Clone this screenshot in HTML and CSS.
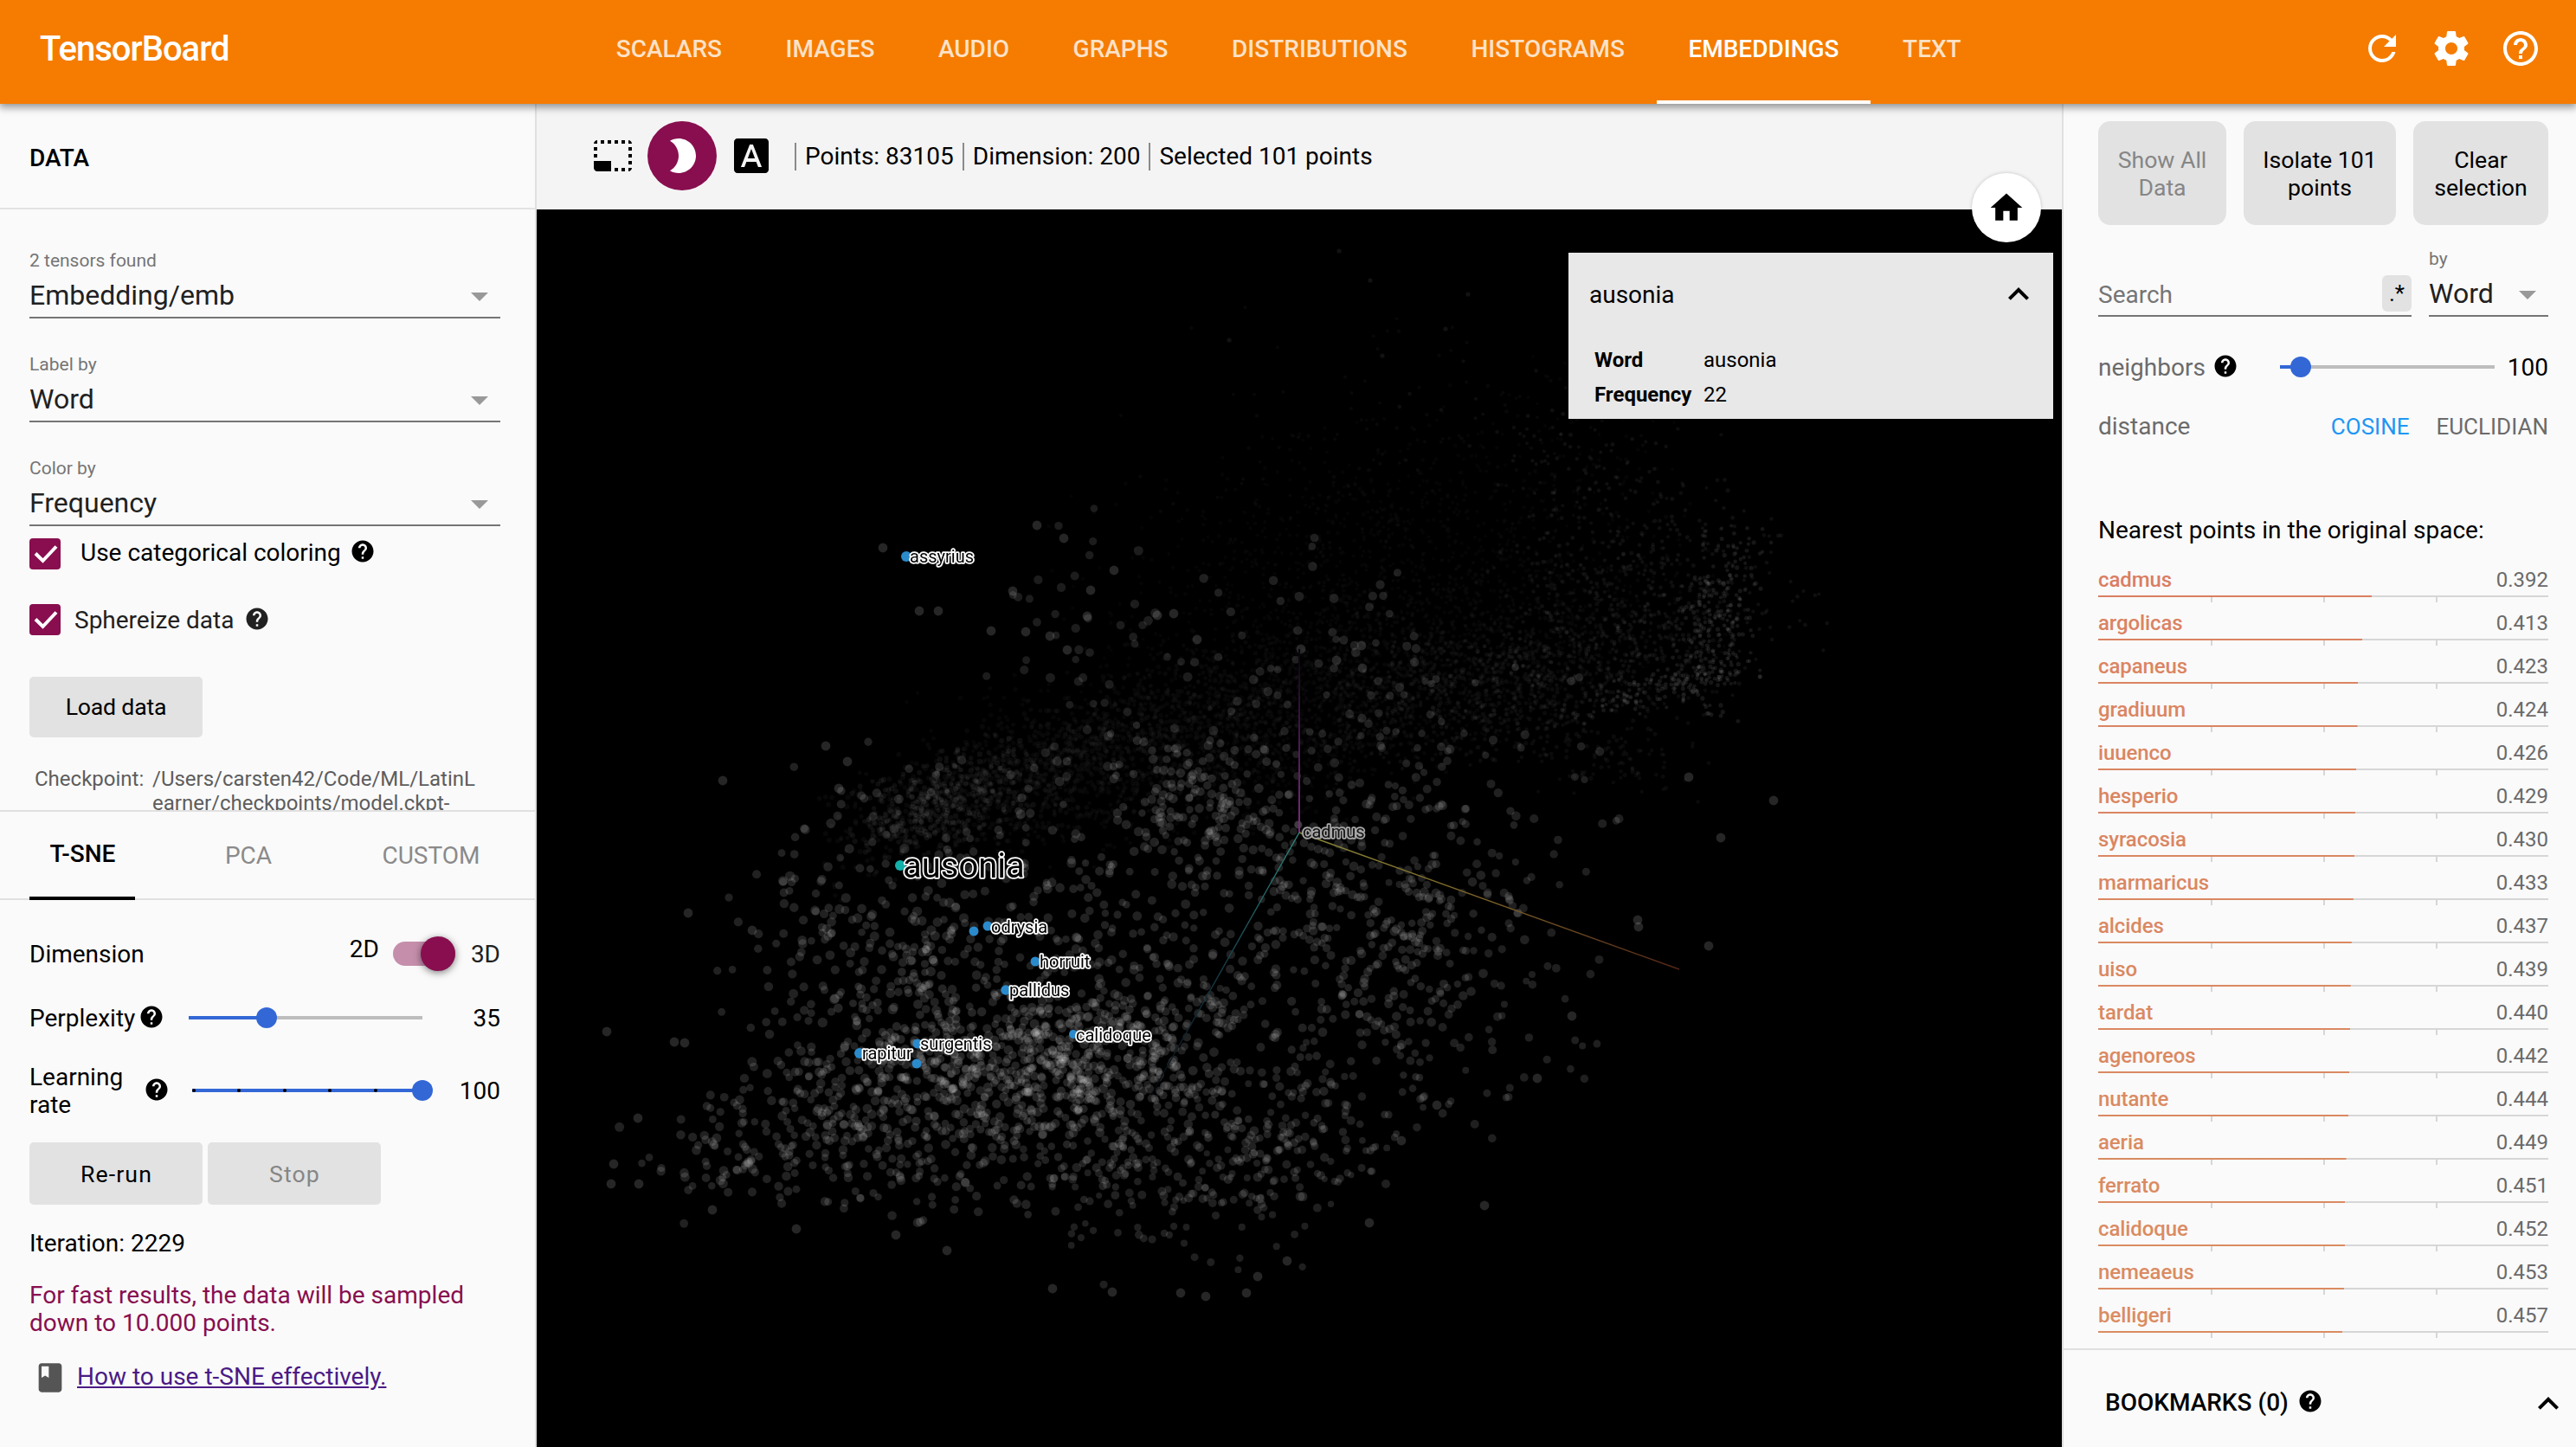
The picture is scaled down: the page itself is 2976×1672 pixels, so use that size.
FILE: index.html
```html
<!DOCTYPE html>
<html lang="en">
<head>
<meta charset="utf-8">
<title>TensorBoard</title>
<link rel="stylesheet" href="styles.css">
</head>
<body>
<svg class="defs" width="0" height="0">
  <symbol id="i-help" viewBox="0 0 24 24"><path d="M12 2C6.48 2 2 6.48 2 12s4.480 10 10 10 10-4.480 10-10S17.520 2 12 2zm1 17h-2v-2h2v2zm2.070-7.750l-.9.920C13.450 12.900 13 13.500 13 15h-2v-.5c0-1.100.450-2.100 1.170-2.830l1.240-1.260c.370-.360.590-.860.590-1.410 0-1.100-.9-2-2-2s-2 .9-2 2H8c0-2.210 1.790-4 4-4s4 1.790 4 4c0 .880-.360 1.680-.930 2.250z"/></symbol>
  <symbol id="i-drop" viewBox="0 0 24 24"><path d="M7 10l5 5 5-5z"/></symbol>
  <symbol id="i-check" viewBox="0 0 36 36"><path d="M7 17.500l8.500 8.500L31 9.500" fill="none" stroke="#fff" stroke-width="4"/></symbol>
  <symbol id="i-less" viewBox="0 0 24 24"><path d="M12 8l-6 6 1.410 1.410L12 10.830l4.590 4.580L18 14z"/></symbol>
</svg>

<header class="topbar">
  <div class="brand">TensorBoard</div>
  <nav class="tabs">
    <a class="tab">SCALARS</a>
    <a class="tab">IMAGES</a>
    <a class="tab">AUDIO</a>
    <a class="tab">GRAPHS</a>
    <a class="tab">DISTRIBUTIONS</a>
    <a class="tab">HISTOGRAMS</a>
    <a class="tab active">EMBEDDINGS</a>
    <a class="tab">TEXT</a>
  </nav>
  <div class="actions">
    <svg class="icon" viewBox="0 0 24 24"><path d="M17.650 6.350C16.200 4.900 14.210 4 12 4c-4.420 0-7.990 3.580-7.990 8s3.570 8 7.990 8c3.730 0 6.840-2.550 7.730-6h-2.080c-.820 2.330-3.040 4-5.650 4-3.310 0-6-2.690-6-6s2.690-6 6-6c1.660 0 3.140.690 4.220 1.780L13 11h7V4l-2.350 2.350z"/></svg>
    <svg class="icon" viewBox="0 0 24 24"><path d="M19.430 12.980c.040-.320.070-.640.070-.980s-.030-.660-.070-.980l2.110-1.650c.190-.150.240-.420.120-.640l-2-3.460c-.120-.220-.390-.300-.610-.220l-2.490 1c-.520-.400-1.080-.730-1.690-.980l-.380-2.650C14.460 2.180 14.250 2 14 2h-4c-.250 0-.460.180-.490.420l-.380 2.650c-.610.250-1.170.590-1.690.980l-2.490-1c-.230-.090-.490 0-.610.220l-2 3.460c-.130.220-.070.490.120.640l2.110 1.650c-.040.320-.070.650-.070.980s.030.660.070.980l-2.110 1.650c-.190.150-.240.420-.120.640l2 3.460c.120.220.390.300.610.220l2.490-1c.520.400 1.080.730 1.690.980l.380 2.650c.030.240.240.420.490.420h4c.250 0 .460-.180.490-.420l.380-2.650c.610-.250 1.170-.590 1.690-.980l2.490 1c.230.090.490 0 .610-.220l2-3.460c.120-.220.070-.490-.120-.640l-2.110-1.650zM12 15.500c-1.930 0-3.500-1.570-3.500-3.500s1.570-3.500 3.500-3.500 3.500 1.570 3.500 3.500-1.570 3.500-3.500 3.500z"/></svg>
    <svg class="icon" viewBox="0 0 24 24"><path d="M11 18h2v-2h-2v2zm1-16C6.480 2 2 6.480 2 12s4.480 10 10 10 10-4.480 10-10S17.520 2 12 2zm0 18c-4.410 0-8-3.590-8-8s3.590-8 8-8 8 3.590 8 8-3.590 8-8 8zm0-14c-2.210 0-4 1.790-4 4h2c0-1.100.9-2 2-2s2 .9 2 2c0 2-3 1.750-3 5h2c0-2.250 3-2.500 3-5 0-2.210-1.790-4-4-4z"/></svg>
  </div>
</header>

<main class="body">
  <aside class="left">
    <h2 class="panel-title">DATA</h2>
    <section class="data">
      <div class="field"><span class="field-label">2 tensors found</span><div class="field-value">Embedding/emb<svg class="drop"><use href="#i-drop"/></svg></div></div>
      <div class="field"><span class="field-label">Label by</span><div class="field-value">Word<svg class="drop"><use href="#i-drop"/></svg></div></div>
      <div class="field"><span class="field-label">Color by</span><div class="field-value">Frequency<svg class="drop"><use href="#i-drop"/></svg></div></div>
      <div class="check first"><svg class="box"><use href="#i-check"/></svg><span>Use categorical coloring</span><svg class="help"><use href="#i-help"/></svg></div>
      <div class="check second"><svg class="box"><use href="#i-check"/></svg><span>Sphereize data</span><svg class="help"><use href="#i-help"/></svg></div>
      <button class="btn load">Load data</button>
      <div class="checkpoint"><span>Checkpoint:</span><span>/Users/carsten42/Code/ML/LatinL<br>earner/checkpoints/model.ckpt-</span></div>
    </section>
    <nav class="proj-tabs">
      <a class="proj on"><span>T-SNE</span></a>
      <a class="proj pca">PCA</a>
      <a class="proj custom">CUSTOM</a>
    </nav>
    <section class="tsne">
      <div class="row dim"><span class="grow">Dimension</span><span class="two">2D</span><div class="toggle"><i></i></div><span class="three">3D</span></div>
      <div class="row perp">
        <div class="lab"><span>Perplexity</span><svg class="help"><use href="#i-help"/></svg></div>
        <div class="slider"><i class="fill" style="width:33.3%"></i><i class="knob" style="left:33.3%"></i></div>
        <span class="val">35</span>
      </div>
      <div class="row rate">
        <div class="lab"><span>Learning<br>rate</span><svg class="help"><use href="#i-help"/></svg></div>
        <div class="slider"><i class="fill" style="width:100%"></i><div class="dots"><b></b><b></b><b></b><b></b><b></b><b></b></div><i class="knob" style="left:100%"></i></div>
        <span class="val">100</span>
      </div>
      <div class="buttons"><button class="btn run">Re-run</button><button class="btn run off">Stop</button></div>
      <p class="iter">Iteration: 2229</p>
      <p class="note">For fast results, the data will be sampled<br>down to 10.000 points.</p>
      <div class="howto"><svg class="book" viewBox="0 0 24 24"><path d="M18 2H6c-1.100 0-2 .9-2 2v16c0 1.100.9 2 2 2h12c1.100 0 2-.9 2-2V4c0-1.100-.9-2-2-2zM6 4h5v8l-2.500-1.500L6 12V4z"/></svg><a>How to use t-SNE effectively.</a></div>
    </section>
  </aside>

  <section class="center">
    <div class="toolbar">
      <svg class="icon select" viewBox="0 0 24 24"><path d="M23 15h-2v2h2v-2zm0-4h-2v2h2v-2zm0 8h-2v2c1 0 2-1 2-2zM15 3h-2v2h2V3zm8 4h-2v2h2V7zm-2-4v2h2c0-1-1-2-2-2zM3 21h8v-6H1v4c0 1.100.9 2 2 2zM3 7H1v2h2V7zm12 12h-2v2h2v-2zm4-16h-2v2h2V3zm0 16h-2v2h2v-2zM3 3C2 3 1 4 1 5h2V3zm0 8H1v2h2v-2zm8-8H9v2h2V3zM7 3H5v2h2V3z"/></svg>
      <span class="night"><svg class="icon" viewBox="0 0 24 24"><path d="M10 2c-1.820 0-3.530.5-5 1.350C7.990 5.080 10 8.300 10 12s-2.010 6.920-5 8.650C6.470 21.500 8.180 22 10 22c5.520 0 10-4.480 10-10S15.520 2 10 2z"/></svg></span>
      <svg class="icon letters" viewBox="0 0 24 24"><path d="M9.930 13.500h4.140L12 7.980zM20 2H4c-1.100 0-2 .9-2 2v16c0 1.100.9 2 2 2h16c1.100 0 2-.9 2-2V4c0-1.100-.9-2-2-2zm-4.050 16.500l-1.140-3H9.170l-1.120 3H5.960l5.110-13h1.860l5.110 13h-2.090z"/></svg>
      <div class="stats"><span>Points: 83105</span><span>Dimension: 200</span><span>Selected 101 points</span></div>
    </div>
    <div class="scene">
      <canvas id="cloud" width="1762" height="1430"></canvas>
      <svg class="overlay" viewBox="620 242 1762 1430">
        <defs>
          <linearGradient id="ax" gradientUnits="userSpaceOnUse" x1="1501" y1="962" x2="1940" y2="1120"><stop offset="0" stop-color="#8a8b38"/><stop offset=".5" stop-color="#7a6028"/><stop offset="1" stop-color="#542516"/></linearGradient>
          <linearGradient id="ay" gradientUnits="userSpaceOnUse" x1="1501" y1="962" x2="1501" y2="750"><stop offset="0" stop-color="#7d2b80"/><stop offset=".5" stop-color="#47194f"/><stop offset="1" stop-color="#08030c"/></linearGradient>
          <linearGradient id="az" gradientUnits="userSpaceOnUse" x1="1501" y1="962" x2="1330" y2="1265"><stop offset="0" stop-color="#2f8a80"/><stop offset=".5" stop-color="#183f4c"/><stop offset="1" stop-color="#05090f"/></linearGradient>
        </defs>
        <path d="M1501 962L1940 1120" stroke="url(#ax)" stroke-width="1.400"/>
        <path d="M1500 962h2V750h-2z" fill="url(#ay)"/>
        <path d="M1501 962L1330 1265" stroke="url(#az)" stroke-width="1.400"/>
        <g class="hits">
          <circle cx="1047" cy="643" r="6"/><circle cx="1141" cy="1070" r="5.500"/><circle cx="1125" cy="1076" r="5.500"/>
          <circle cx="1196" cy="1111" r="5.500"/><circle cx="1162" cy="1144" r="5.800"/><circle cx="1240" cy="1195" r="5"/>
          <circle cx="1060" cy="1206" r="5.500"/><circle cx="993" cy="1217" r="6"/><circle cx="1059" cy="1229" r="5.500"/>
          <circle class="picked" cx="1040" cy="1000" r="6"/>
        </g>
        <g class="names">
          <text x="1051" y="650">assyrius</text>
          <text x="1145" y="1078">odrysia</text>
          <text x="1201" y="1118">horruit</text>
          <text x="1166" y="1151">pallidus</text>
          <text x="1243" y="1203">calidoque</text>
          <text x="1063" y="1213">surgentis</text>
          <text x="996" y="1224">rapitur</text>
          <text class="dim-name" x="1505" y="968">cadmus</text>
          <text class="main-name" x="1043" y="1014">ausonia</text>
        </g>
      </svg>
      <span class="home"><svg viewBox="0 0 24 24"><path d="M10 20v-6h4v6h5v-8h3L12 3 2 12h3v8z"/></svg></span>
      <div class="card">
        <div class="card-head"><span>ausonia</span><svg class="icon"><use href="#i-less"/></svg></div>
        <dl><dt>Word</dt><dd>ausonia</dd><dt>Frequency</dt><dd>22</dd></dl>
      </div>
    </div>
  </section>

  <aside class="right">
    <section class="inspect">
      <div class="filters"><button class="btn sq w1 off">Show All<br>Data</button><button class="btn sq w2">Isolate 101<br>points</button><button class="btn sq w3">Clear<br>selection</button></div>
      <div class="searchrow">
        <div class="search"><span>Search</span><button class="regex">.*</button></div>
        <div class="field by"><span class="field-label">by</span><div class="field-value">Word<svg class="drop"><use href="#i-drop"/></svg></div></div>
      </div>
      <div class="row nb">
        <div class="lab"><span>neighbors</span><svg class="help"><use href="#i-help"/></svg></div>
        <div class="slider"><i class="fill" style="width:9.700%"></i><i class="knob" style="left:9.700%"></i></div>
        <span class="val">100</span>
      </div>
      <div class="row dist"><span class="grow">distance</span><a class="on">COSINE</a><a>EUCLIDIAN</a></div>
      <p class="near">Nearest points in the original space:</p>
      <div class="list">
        <div class="item" style="--d:.392"><div><span>cadmus</span><em>0.392</em></div><i></i></div>
        <div class="item" style="--d:.413"><div><span>argolicas</span><em>0.413</em></div><i></i></div>
        <div class="item" style="--d:.423"><div><span>capaneus</span><em>0.423</em></div><i></i></div>
        <div class="item" style="--d:.424"><div><span>gradiuum</span><em>0.424</em></div><i></i></div>
        <div class="item" style="--d:.426"><div><span>iuuenco</span><em>0.426</em></div><i></i></div>
        <div class="item" style="--d:.429"><div><span>hesperio</span><em>0.429</em></div><i></i></div>
        <div class="item" style="--d:.430"><div><span>syracosia</span><em>0.430</em></div><i></i></div>
        <div class="item" style="--d:.433"><div><span>marmaricus</span><em>0.433</em></div><i></i></div>
        <div class="item" style="--d:.437"><div><span>alcides</span><em>0.437</em></div><i></i></div>
        <div class="item" style="--d:.439"><div><span>uiso</span><em>0.439</em></div><i></i></div>
        <div class="item" style="--d:.440"><div><span>tardat</span><em>0.440</em></div><i></i></div>
        <div class="item" style="--d:.442"><div><span>agenoreos</span><em>0.442</em></div><i></i></div>
        <div class="item" style="--d:.444"><div><span>nutante</span><em>0.444</em></div><i></i></div>
        <div class="item" style="--d:.449"><div><span>aeria</span><em>0.449</em></div><i></i></div>
        <div class="item" style="--d:.451"><div><span>ferrato</span><em>0.451</em></div><i></i></div>
        <div class="item" style="--d:.452"><div><span>calidoque</span><em>0.452</em></div><i></i></div>
        <div class="item" style="--d:.453"><div><span>nemeaeus</span><em>0.453</em></div><i></i></div>
        <div class="item" style="--d:.457"><div><span>belligeri</span><em>0.457</em></div><i></i></div>
      </div>
    </section>
    <footer class="bookmarks"><span>BOOKMARKS (0)</span><svg class="help"><use href="#i-help"/></svg><svg class="icon"><use href="#i-less"/></svg></footer>
  </aside>
</main>
<script src="cloud.js"></script>
</body>
</html>
```
FILE: styles.css
```css
* { box-sizing: border-box; }

body {
  margin: 0;
  width: 2976px;
  height: 1672px;
  overflow: hidden;
  display: flex;
  flex-direction: column;
  background: #fafafa;
  color: #000;
  font-family: Roboto, "Liberation Sans", sans-serif;
  font-size: 28px;
  line-height: 32px;
}

p, h2, dl, dd { margin: 0; }
svg { display: block; flex: none; }
.defs { position: absolute; }
.icon { width: 48px; height: 48px; fill: currentColor; }
.help { width: 30px; height: 30px; }
.grow { flex: 1; }

/* top bar */
.topbar {
  flex: none;
  height: 120px;
  display: flex;
  background: #f57c00;
  color: #fff;
  position: relative;
  z-index: 5;
  box-shadow: 0 3px 9px 1px rgba(0, 0, 0, .42);
}
.brand {
  flex: 0 0 675px;
  padding: 0 0 7px 46px;
  display: flex;
  align-items: center;
  font-size: 40px;
  font-weight: 500;
  letter-spacing: -1px;
}
.tabs { display: flex; }
.tab {
  display: flex;
  align-items: center;
  padding: 0 36.750px 2px;
  border-bottom: 4px solid transparent;
  color: rgba(255, 255, 255, .78);
  font-weight: 500;
}
.tab.active { color: #fff; border-color: #fff; }
.actions {
  margin-left: auto;
  padding: 0 40px 8px 0;
  display: flex;
  align-items: center;
  gap: 32px;
}

.body {
  flex: 1;
  display: grid;
  grid-template-columns: 620px 1fr 594px;
  min-height: 0;
}

/* left panel */
.left {
  border-right: 2px solid #e0e0e0;
  display: flex;
  flex-direction: column;
  min-height: 0;
}
.panel-title {
  height: 122px;
  padding: 5px 34px 0;
  display: flex;
  align-items: center;
  border-bottom: 2px solid #e3e3e3;
  font-size: 28px;
  font-weight: 500;
}
.data { height: 694px; padding: 6px 40px 0 34px; overflow: hidden; }
.field {
  height: 120px;
  display: flex;
  flex-direction: column;
  justify-content: flex-end;
  padding-bottom: 5px;
  border-bottom: 2px solid #757575;
}
.field-label { font-size: 21px; line-height: 24px; margin-bottom: 8px; color: #757575; }
.field-value {
  height: 40px;
  display: flex;
  align-items: center;
  justify-content: space-between;
  font-size: 32px;
  color: #212121;
}
.drop { width: 48px; height: 48px; margin-top: 2px; fill: #999; }

.check { display: flex; align-items: flex-start; height: 36px; }
.box { width: 36px; height: 36px; background: #880e4f; border-radius: 4px; }
.first { margin-top: 14px; }
.first span { margin: 1px 10px 0 23px; }
.second { margin-top: 40px; color: #212121; fill: #212121; }
.second span { margin: 3px 12px 0 16px; }
.second .help { margin-top: 2px; }

.btn {
  border: 0;
  padding: 0;
  border-radius: 5px;
  background: #e2e2e2;
  color: #000;
  font-family: inherit;
  font-size: 26.670px;
  line-height: 32px;
}
.btn.off { color: #868686; }
.load { display: block; width: 200px; height: 70px; margin-top: 48px; letter-spacing: -.2px; }
.checkpoint {
  margin-top: 34px;
  padding-left: 6px;
  display: grid;
  grid-template-columns: 136px 1fr;
  font-size: 24px;
  line-height: 28px;
  color: #5d5d5d;
}

.proj-tabs {
  flex: none;
  height: 104px;
  padding-left: 34px;
  display: flex;
  border-top: 2px solid #e0e0e0;
  border-bottom: 2px solid #e0e0e0;
}
.proj { display: flex; align-items: center; justify-content: center; color: #8a8a8a; padding-top: 2px; }
.on.proj {
  width: 122px;
  margin-bottom: -2px;
  padding: 0 0 1px 1px;
  border-bottom: 4px solid #000;
  color: #000;
  font-weight: 500;
}
.pca { width: 262px; }
.custom { width: 160px; }

.tsne { padding: 42px 40px 0 34px; }
.row { display: flex; align-items: center; }
.row > span, .row > a, .lab > span { padding-top: 2px; }
.dim { height: 40px; }
.two { margin: -12px 16px 0 0; }
.toggle {
  width: 72px;
  height: 28px;
  margin-right: 18px;
  border-radius: 14px;
  background: #c58fac;
  display: flex;
  align-items: center;
  justify-content: flex-end;
}
.toggle i {
  width: 40px;
  height: 40px;
  border-radius: 50%;
  background: #880e4f;
  box-shadow: 0 2px 8px rgba(0, 0, 0, .5);
  flex: none;
}
.three { color: #212121; }
.perp { height: 32px; margin-top: 38px; }
.lab { display: flex; align-items: center; }
.lab .help { margin-top: -2px; }
.perp .lab { width: 184px; gap: 4px; }
.perp .slider { width: 270px; }
.rate { height: 64px; margin-top: 36px; }
.rate .lab { width: 188px; }
.rate .lab span { width: 132px; }
.rate .slider { width: 266px; }
.val { flex: 1; text-align: right; }

.slider { position: relative; height: 4px; background: #bdbdbd; }
.fill { display: block; height: 4px; background: #3367d6; }
.knob {
  position: absolute;
  top: -10px;
  width: 24px;
  height: 24px;
  margin-left: -12px;
  border-radius: 50%;
  background: #3367d6;
}
.dots { display: flex; justify-content: space-between; margin-top: -4px; }
.dots b { width: 4px; height: 4px; border-radius: 50%; background: #000; }

.buttons { display: flex; gap: 6px; margin-top: 28px; }
.run { width: 200px; height: 72px; letter-spacing: 1.100px; padding: 1px 0 0 1px; }
.iter { margin-top: 29px; }
.note { margin-top: 28px; color: #880e4f; }
.howto { margin-top: 27px; height: 40px; display: flex; align-items: center; }
.book { width: 40px; height: 40px; margin: 0 11px 0 4px; fill: #555; }
.howto a { color: #4b1a85; text-decoration: underline; margin-top: -3px; }

/* projector */
.center { display: flex; flex-direction: column; min-width: 0; }
.toolbar {
  height: 122px;
  padding: 0 0 2px 64px;
  display: flex;
  align-items: center;
  background: #f4f4f4;
}
.night {
  width: 80px;
  height: 80px;
  margin: 0 16px;
  border-radius: 50%;
  background: #880e4f;
  color: #fff;
  display: flex;
  align-items: center;
  justify-content: center;
}
.stats { display: flex; margin-left: 26px; padding-top: 1px; }
.stats span { padding: 0 10px; border-left: 2px solid #8a8a8a; }

.scene { flex: 1; position: relative; background: #000; }
#cloud, .overlay { position: absolute; left: 0; top: 0; width: 1762px; height: 1430px; }
.hits { fill: #2b8acb; }
.picked { fill: #14b0aa; }
.names text {
  font-size: 20px;
  fill: #000;
  stroke: #fff;
  stroke-width: 3.500px;
  stroke-linejoin: round;
  paint-order: stroke;
}
.names .main-name { font-size: 40px; }
.names .dim-name { stroke: #a8a8a8; fill: #111; }

.home {
  position: absolute;
  right: 24px;
  top: -42px;
  width: 80px;
  height: 80px;
  border-radius: 50%;
  background: #fff;
  box-shadow: 0 0 4px rgba(0, 0, 0, .2);
  display: flex;
  align-items: center;
  justify-content: center;
}
.home svg { width: 44px; height: 44px; }
.card {
  position: absolute;
  right: 10px;
  top: 50px;
  width: 560px;
  height: 192px;
  padding: 24px 16px 0 24px;
  background: #e8e8e8;
}
.card-head { display: flex; align-items: center; justify-content: space-between; height: 48px; }
.card-head span { padding-top: 2px; }
.card dl {
  margin: 32px 0 0 6px;
  display: grid;
  grid-template-columns: 126px 1fr;
  font-size: 24px;
  line-height: 40px;
}
.card dt { font-weight: 700; }

/* inspector */
.right {
  border-left: 2px solid #e0e0e0;
  display: flex;
  flex-direction: column;
  min-height: 0;
}
.inspect { flex: 1; padding: 20px 32px 0 40px; min-height: 0; }
.filters { display: flex; gap: 20px; }
.sq { height: 120px; border-radius: 14px; padding-top: 1px; }
.w1 { width: 148px; }
.w2 { width: 176px; }
.w3 { width: 156px; }
.searchrow { display: flex; align-items: flex-end; gap: 20px; height: 106px; }
.search {
  width: 362px;
  height: 50px;
  display: flex;
  align-items: center;
  justify-content: space-between;
  border-bottom: 2px solid #757575;
  color: #757575;
}
.search span { padding-top: 2px; }
.regex {
  width: 34px;
  height: 42px;
  margin-bottom: 2px;
  border: 0;
  padding: 0;
  border-radius: 6px;
  background: #e2e2e2;
  font-family: inherit;
  font-size: 26px;
}
.by { width: 138px; height: 106px; }
.nb { height: 32px; margin-top: 42px; }
.nb .lab { width: 210px; gap: 8px; }
.nb .lab span { color: #6b6b6b; }
.nb .slider { width: 248px; }
.dist { height: 32px; margin-top: 36px; color: #6b6b6b; }
.dist a { font-size: 26px; margin-left: 31px; }
.dist .on { color: #2196f3; }
.near { margin-top: 89px; }
.list { margin-top: 11px; }
.item { height: 50px; padding-top: 16px; color: hsl(calc(14 + (var(--d) - .392) * 110), 62%, 62%); }
.item div {
  display: flex;
  justify-content: space-between;
  height: 32px;
  font-size: 24px;
  line-height: 28px;
}
.item span { font-weight: 500; letter-spacing: -.1px; }
.item em { font-style: normal; color: #6a6a6a; }
.item i {
  display: block;
  height: 8px;
  background:
    linear-gradient(currentColor, currentColor) 0 0 / calc((1 - var(--d)) * 520px) 2px no-repeat,
    linear-gradient(#d6d6d6, #d6d6d6) 0 0 / 100% 2px no-repeat,
    linear-gradient(#d6d6d6, #d6d6d6) 130px 0 / 2px 8px no-repeat,
    linear-gradient(#d6d6d6, #d6d6d6) 260px 0 / 2px 8px no-repeat,
    linear-gradient(#d6d6d6, #d6d6d6) 390px 0 / 2px 8px no-repeat;
}
.bookmarks {
  flex: none;
  height: 114px;
  padding: 9px 8px 0 48px;
  display: flex;
  align-items: center;
  border-top: 2px solid #e0e0e0;
  font-weight: 500;
}
.bookmarks .help { margin: -4px auto 0 10px; }
.bookmarks .icon { margin-top: 2px; }
```
FILE: cloud.js
```js
// Seeded point cloud: every cluster is a rotated gaussian in page coordinates.
const ctx = document.getElementById('cloud').getContext('2d');
ctx.translate(-620, -242);
let seed = 20177;
function rnd() {
  seed = (seed + 0x6D2B79F5) | 0;
  let t = Math.imul(seed ^ (seed >>> 15), 1 | seed);
  t = (t + Math.imul(t ^ (t >>> 7), 61 | t)) ^ t;
  return ((t ^ (t >>> 14)) >>> 0) / 4294967296;
}
function gauss() {
  let g;
  do { g = Math.sqrt(-2 * Math.log(1 - rnd())) * Math.cos(6.28318 * rnd()); } while (Math.abs(g) > 2.1);
  return g;
}
function dot(x, y, r, a) {
  ctx.fillStyle = 'rgba(255,255,255,' + a + ')';
  ctx.beginPath();
  ctx.arc(x, y, r, 0, 7);
  ctx.fill();
}
// n, centre x, centre y, spread along, spread across, angle, radius, alpha
const clusters = [
  // far side
  [1500, 1600, 680, 180, 100, -0.3, 2.2, 0.02],
  [1300, 1560, 800, 210, 52, -0.3, 2.4, 0.026],
  [850, 1760, 790, 110, 42, -0.15, 2.4, 0.042],
  [350, 1890, 700, 85, 50, 0, 2.3, 0.055],
  [230, 1985, 715, 24, 55, 0.2, 2.4, 0.085],
  [140, 1920, 795, 55, 12, -0.25, 2.4, 0.085],
  [130, 1880, 590, 85, 45, 0.5, 2.3, 0.06],
  [60, 1840, 520, 110, 40, 0.3, 2.2, 0.05],
  [110, 1600, 520, 150, 80, 0, 2.1, 0.03],
  [80, 1860, 885, 55, 20, 0, 2.4, 0.04],
  [10, 2085, 705, 25, 30, 0, 2.2, 0.06],
  // middle distance
  [900, 1210, 890, 135, 38, -0.35, 2.8, 0.03],
  [400, 1090, 925, 55, 26, -0.4, 3.0, 0.055],
  [900, 1400, 850, 170, 60, -0.2, 2.6, 0.025],
  // near side
  [110, 1410, 935, 80, 48, 0, 4.9, 0.13],
  [45, 1385, 930, 42, 36, 0, 5.0, 0.13],
  [52, 1250, 770, 90, 80, 0.5, 5.0, 0.11],
  [50, 1530, 760, 80, 65, 0.4, 5.0, 0.12],
  [100, 1650, 900, 105, 70, 0, 4.8, 0.12],
  [190, 1560, 1060, 100, 95, 0, 4.9, 0.13],
  [60, 1600, 1100, 50, 65, 0, 4.9, 0.13],
  [130, 1680, 1120, 90, 90, 0, 4.6, 0.12],
  [300, 1240, 1060, 160, 100, 0, 5.0, 0.13],
  [260, 1180, 1160, 170, 75, 0, 5.0, 0.13],
  [120, 1000, 1070, 75, 80, 0, 5.2, 0.13],
  [330, 1180, 1225, 110, 45, 0.1, 5.0, 0.14],
  [80, 1290, 1190, 75, 32, 0, 4.9, 0.13],
  [400, 1210, 1280, 190, 58, 0, 4.9, 0.13],
  [135, 900, 1310, 90, 40, -0.2, 5.0, 0.13],
  [130, 1040, 1320, 110, 45, 0, 4.9, 0.13],
  [180, 1390, 1340, 120, 50, 0, 4.6, 0.12],
  [90, 1510, 1260, 120, 60, 0, 4.5, 0.12],
  [40, 1390, 1390, 100, 45, 0, 4.2, 0.12]
];
for (const [n, cx, cy, sa, sb, ang, r, a] of clusters) {
  for (let i = 0; i < n; i++) {
    const u = gauss() * sa, v = gauss() * sb, k = 0.85 + rnd() * 0.25;
    dot(cx + u * Math.cos(ang) - v * Math.sin(ang), cy + u * Math.sin(ang) + v * Math.cos(ang), r * k, a);
  }
}
const strays = [
  [1020, 633], [1198, 607], [1229, 622], [1287, 659], [1260, 682], [1170, 683], [1062, 706], [1084, 706],
  [1256, 712], [1337, 711], [1356, 709], [1145, 729], [1185, 730], [1213, 735], [1233, 751], [1383, 739],
  [1573, 746], [1503, 750], [1544, 763], [1574, 772], [954, 862], [979, 880], [835, 902], [969, 911],
  [795, 1055], [869, 1075], [1951, 898], [1974, 1093], [2049, 925], [1988, 968], [1893, 1071], [1892, 1063],
  [701, 1192], [706, 1368], [709, 1345], [738, 1368], [779, 1204], [791, 1205], [737, 1292], [1216, 1489],
  [1285, 1493], [1364, 1494], [1393, 1498], [1440, 1494], [1453, 1475], [1487, 1457], [1582, 1413], [1715, 1393],
  [1776, 1246], [1816, 1174], [1660, 1277], [1619, 1318], [1035, 1427], [1094, 1445], [920, 1420], [823, 1398]
];
for (const [x, y] of strays) dot(x, y, 5.4, 0.15);
for (const [x, y] of [[1547, 290], [1583, 324], [1696, 340], [1420, 393], [1670, 380], [1597, 411]]) dot(x, y, 2.6, 0.07);
```
